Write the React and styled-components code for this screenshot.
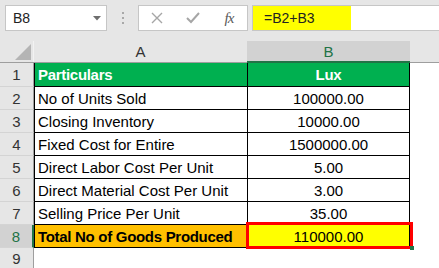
import React from "react";
import styled, { createGlobalStyle } from "styled-components";

const GlobalStyle = createGlobalStyle`
  html, body {
    margin: 0;
    padding: 0;
    background: #ffffff;
  }
  body {
    font-family: "Liberation Sans", Arial, sans-serif;
  }
`;

const Window = styled.div`
  width: 439px;
  height: 268px;
  overflow: hidden;
  background: #ffffff;
`;

const FormulaBar = styled.div`
  display: flex;
  align-items: flex-start;
  box-sizing: border-box;
  height: 41px;
  padding: 5px 0 0 5px;
  background: #e6e6e6;
`;

const NameBox = styled.div`
  box-sizing: border-box;
  width: 102px;
  height: 26px;
  display: flex;
  align-items: center;
  justify-content: space-between;
  padding: 0 5px 0 7px;
  background: #ffffff;
  border: 1px solid #c6c6c6;
  font-size: 14px;
  color: #222222;
`;

const Grip = styled.div`
  width: 31px;
  height: 26px;
  display: flex;
  flex-direction: column;
  align-items: center;
  justify-content: center;
  gap: 3px;
`;

const GripDot = styled.span`
  width: 2px;
  height: 2px;
  background: #a8a8a8;
`;

const ButtonGroup = styled.div`
  box-sizing: border-box;
  width: 110px;
  height: 26px;
  display: flex;
  background: #ffffff;
  border: 1px solid #c6c6c6;
`;

const IconSlot = styled.div`
  width: 36px;
  height: 100%;
  display: flex;
  align-items: center;
  justify-content: center;
`;

const Fx = styled.span`
  font-family: "Liberation Serif", "Times New Roman", serif;
  font-style: italic;
  font-size: 15px;
  color: #5a5a5a;
  letter-spacing: -1px;
`;

const FormulaInput = styled.div`
  box-sizing: border-box;
  flex: 1;
  height: 26px;
  margin-left: 4px;
  display: flex;
  background: #ffffff;
  border: 1px solid #c6c6c6;
  border-right: none;
`;

const Highlight = styled.div`
  box-sizing: border-box;
  width: 98px;
  height: 100%;
  display: flex;
  align-items: center;
  padding-left: 11px;
  background: #ffff00;
  font-size: 14px;
  color: #222222;
`;

const HeaderRow = styled.div`
  display: flex;
  box-sizing: border-box;
  height: 22px;
  background: #e6e6e6;
  border-bottom: 1px solid #9e9e9e;
`;

const Corner = styled.div`
  box-sizing: border-box;
  width: 34px;
  height: 100%;
  display: flex;
  align-items: flex-end;
  justify-content: flex-end;
  padding: 0 2px 2px 0;
  border-right: 1px solid #f2f2f2;
`;

const ColHeader = styled.div`
  box-sizing: border-box;
  width: ${(p) => p.$width}px;
  height: ${(p) => (p.$active ? "22px" : "100%")};
  display: flex;
  align-items: center;
  justify-content: center;
  font-size: 15px;
  color: ${(p) => (p.$active ? "#217346" : "#333333")};
  background: ${(p) => (p.$active ? "#d2d2d2" : "transparent")};
  border-bottom: ${(p) => (p.$active ? "2px solid #217346" : "none")};
`;

const Row = styled.div`
  display: flex;
  height: ${(p) => p.$height}px;
`;

const RowNum = styled.div`
  box-sizing: border-box;
  width: 34px;
  height: 100%;
  display: flex;
  align-items: center;
  justify-content: center;
  font-size: 15px;
  color: ${(p) => (p.$active ? "#217346" : "#333333")};
  background: ${(p) => (p.$active ? "#d2d2d2" : "#e6e6e6")};
  border-bottom: 1px solid #d4d4d4;
  border-right: ${(p) => (p.$active ? "2px solid #217346" : "1px solid #9e9e9e")};
`;

const Cell = styled.div`
  position: relative;
  box-sizing: border-box;
  width: ${(p) => p.$width}px;
  height: 100%;
  display: flex;
  align-items: center;
  justify-content: ${(p) => (p.$center ? "center" : "flex-start")};
  padding-left: ${(p) => (p.$center ? "0" : "3px")};
  font-size: 15px;
  font-weight: ${(p) => (p.$bold ? 700 : 400)};
  letter-spacing: ${(p) => (p.$bold ? "-0.3px" : "0")};
  color: ${(p) => p.$color || "#000000"};
  background: ${(p) => p.$bg || "#ffffff"};
  border-right: 1px solid #000000;
  border-bottom: 1px solid #000000;
  border-left: ${(p) => (p.$first ? "1px solid #000000" : "none")};
  white-space: nowrap;
  overflow: hidden;
`;

const Selection = styled.div`
  position: absolute;
  top: -3px;
  left: -2px;
  right: -3px;
  bottom: -1px;
  border: 3px solid #ff0000;
  pointer-events: none;
`;

const FillHandle = styled.div`
  position: absolute;
  right: -4px;
  bottom: -2px;
  width: 4px;
  height: 4px;
  background: #217346;
`;

const SelectedCell = styled.div`
  position: relative;
  height: 100%;
`;

const rows = [
  { n: 1, a: "Particulars", b: "Lux", head: true },
  { n: 2, a: "No of Units Sold", b: "100000.00" },
  { n: 3, a: "Closing Inventory", b: "10000.00" },
  { n: 4, a: "Fixed Cost for Entire", b: "1500000.00" },
  { n: 5, a: "Direct Labor Cost Per Unit", b: "5.00" },
  { n: 6, a: "Direct Material Cost Per Unit", b: "3.00" },
  { n: 7, a: "Selling Price Per Unit", b: "35.00" },
  { n: 8, a: "Total No of Goods Produced", b: "110000.00", total: true },
];

function CrossIcon() {
  return (
    <svg width="12" height="12" viewBox="0 0 12 12">
      <path d="M1 1 L11 11 M11 1 L1 11" stroke="#a6a6a6" strokeWidth="1.4" fill="none" />
    </svg>
  );
}

function CheckIcon() {
  return (
    <svg width="14" height="12" viewBox="0 0 14 12">
      <path d="M1 6 L5 10 L13 1" stroke="#a6a6a6" strokeWidth="2" fill="none" />
    </svg>
  );
}

function DropArrow() {
  return (
    <svg width="8" height="5" viewBox="0 0 8 5">
      <path d="M0 0 L8 0 L4 4.5 Z" fill="#6e6e6e" />
    </svg>
  );
}

function CornerTriangle() {
  return (
    <svg width="16" height="16" viewBox="0 0 16 16">
      <path d="M16 0 L16 16 L0 16 Z" fill="#b4b4b4" />
    </svg>
  );
}

export default function App() {
  return (
    <Window>
      <GlobalStyle />
      <FormulaBar>
        <NameBox>
          <span>B8</span>
          <DropArrow />
        </NameBox>
        <Grip>
          <GripDot />
          <GripDot />
          <GripDot />
        </Grip>
        <ButtonGroup>
          <IconSlot>
            <CrossIcon />
          </IconSlot>
          <IconSlot>
            <CheckIcon />
          </IconSlot>
          <IconSlot>
            <Fx>fx</Fx>
          </IconSlot>
        </ButtonGroup>
        <FormulaInput>
          <Highlight>=B2+B3</Highlight>
        </FormulaInput>
      </FormulaBar>

      <HeaderRow>
        <Corner>
          <CornerTriangle />
        </Corner>
        <ColHeader $width={213}>A</ColHeader>
        <ColHeader $width={163} $active>
          B
        </ColHeader>
      </HeaderRow>

      {rows.map((r) => (
        <Row key={r.n} $height={r.n === 1 ? 24 : 23}>
          <RowNum $active={r.total}>{r.n}</RowNum>
          <Cell
            $width={214}
            $first
            $bold={r.head || r.total}
            $color={r.head ? "#ffffff" : "#000000"}
            $bg={r.head ? "#00b050" : r.total ? "#ffc000" : "#ffffff"}
          >
            {r.a}
          </Cell>
          {r.total ? (
            <SelectedCell>
              <Cell $width={162} $center $bg="#ffff00">
                {r.b}
              </Cell>
              <Selection />
              <FillHandle />
            </SelectedCell>
          ) : (
            <Cell
              $width={162}
              $center
              $bold={r.head}
              $color={r.head ? "#ffffff" : "#000000"}
              $bg={r.head ? "#00b050" : "#ffffff"}
            >
              {r.b}
            </Cell>
          )}
        </Row>
      ))}
      <Row $height={21}>
        <RowNum>9</RowNum>
      </Row>
    </Window>
  );
}
